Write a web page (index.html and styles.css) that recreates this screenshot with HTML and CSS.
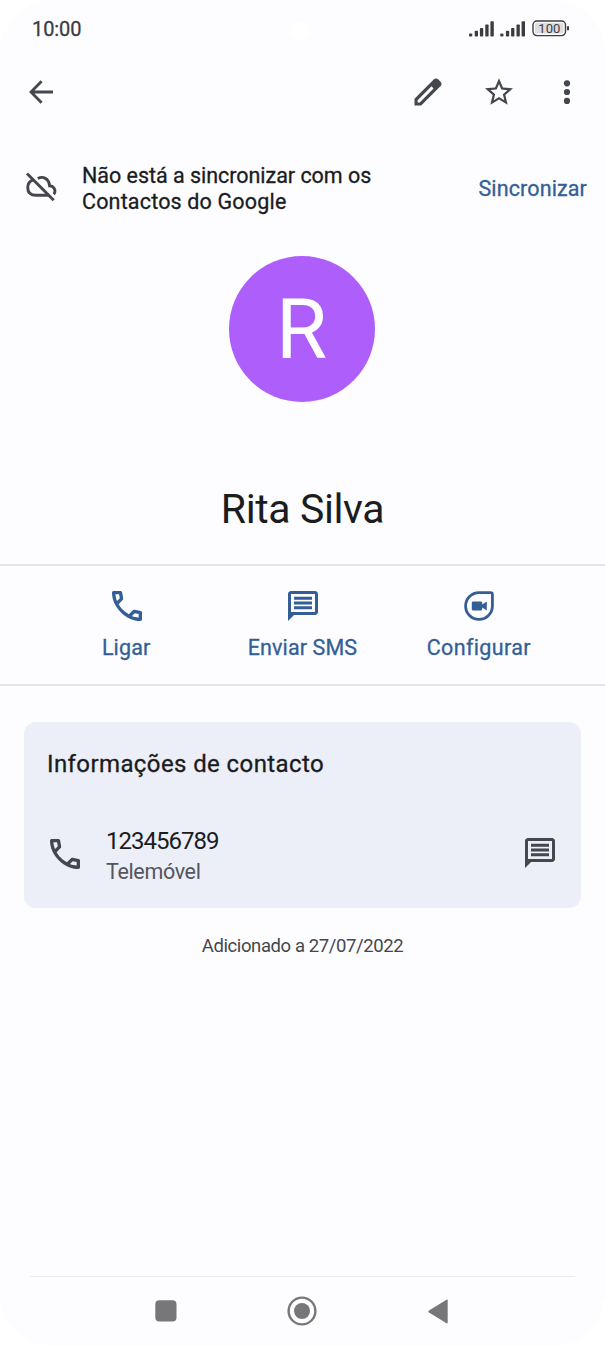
FILE: index.html
```html
<!DOCTYPE html>
<html lang="pt">
<head>
<meta charset="utf-8">
<title>Rita Silva</title>
<link rel="stylesheet" href="styles.css">
</head>
<body>
<svg class="defs" aria-hidden="true">
  <symbol id="phone" viewBox="3 3 18 18"><path d="M19.95 21C17.87 21 15.81 20.55 13.78 19.64C11.74 18.73 9.89 17.44 8.23 15.78C6.56 14.11 5.27 12.26 4.36 10.23C3.45 8.19 3 6.13 3 4.05C3 3.75 3.1 3.5 3.3 3.3C3.5 3.1 3.75 3 4.05 3H8.1C8.33 3 8.54 3.08 8.73 3.24C8.91 3.4 9.02 3.58 9.05 3.8L9.7 7.3C9.73 7.57 9.73 7.79 9.68 7.98C9.63 8.16 9.53 8.32 9.4 8.45L6.98 10.9C7.31 11.52 7.71 12.11 8.16 12.69C8.62 13.26 9.13 13.82 9.68 14.35C10.19 14.87 10.73 15.35 11.3 15.79C11.87 16.23 12.47 16.63 13.1 17L15.45 14.65C15.6 14.5 15.8 14.39 16.04 14.31C16.28 14.24 16.52 14.22 16.75 14.25L20.2 14.95C20.43 15.02 20.63 15.14 20.78 15.31C20.93 15.49 21 15.68 21 15.9V19.95C21 20.25 20.9 20.5 20.7 20.7C20.5 20.9 20.25 21 19.95 21ZM6.03 9L7.68 7.35L7.25 5H5.03C5.11 5.68 5.22 6.36 5.38 7.03C5.53 7.69 5.74 8.35 6.03 9ZM14.98 17.95C15.63 18.23 16.29 18.46 16.96 18.63C17.64 18.79 18.32 18.9 19 18.95V16.75L16.65 16.28L14.98 17.95Z"/></symbol>
  <symbol id="message" viewBox="2 2 20 20"><path fill-rule="evenodd" d="M2 22V4C2 2.9 2.9 2 4 2H20C21.1 2 22 2.9 22 4V16C22 17.1 21.1 18 20 18H6ZM4 4V16H20V4ZM6 5.8H18V7.8H6ZM6 9H18V11H6ZM6 12.1H18V14.1H6Z"/></symbol>
</svg>
<main class="screen">
  <header class="status">
    <time>10:00</time>
    <svg class="signals" viewBox="0 0 102 20">
      <g id="bars"><rect x="1" y="14.5" width="3.3" height="3" rx="1"/><rect x="6.7" y="11.8" width="3.3" height="5.7" rx=".8"/><rect x="11.9" y="9" width="3.3" height="8.5" rx=".8"/><rect x="17.3" y="5.5" width="3.3" height="12" rx=".8"/><rect x="22.4" y="2.2" width="3.4" height="15.3" rx=".8"/></g>
      <use href="#bars" x="31.2"/>
      <rect class="battery" x="65" y="2" width="32.5" height="14.6" rx="4"/>
      <rect class="charge" x="67" y="4" width="28.5" height="10.6" rx="2"/>
      <rect x="99" y="7" width="2" height="4.5" rx="1"/>
      <text x="81.4" y="14.3" text-anchor="middle">100</text>
    </svg>
    <i class="camera"></i>
  </header>
  <nav class="toolbar">
    <svg class="back" viewBox="0 0 24 24"><path d="M12.6 1.2 2 12l10.6 10.8M2 12h22"/></svg>
    <svg class="edit" viewBox="0 0 28 28"><path fill-rule="evenodd" d="M.5 27.5V20.8L19.7 1.5Q22 -.6 24.3 1.5L26.4 3.6Q28.6 6 26.4 8.3L7.2 27.5ZM3.6 24.4H5.7L19.6 10.4 17.5 8.3 3.6 22.2Z"/></svg>
    <svg class="star" viewBox="2 2 20 19"><path d="m22 9.24-7.19-.62L12 2 9.19 8.63 2 9.24l5.46 4.73L5.82 21 12 17.27 18.18 21l-1.63-7.03zM12 15.4l-3.76 2.27 1-4.28-3.32-2.88 4.38-.38L12 6.1l1.71 4.04 4.38.38-3.32 2.88 1 4.28z"/></svg>
    <svg class="more" viewBox="0 0 8 26"><circle cx="4" cy="4.3" r="3.1"/><circle cx="4" cy="13" r="3.1"/><circle cx="4" cy="21.9" r="3.1"/></svg>
  </nav>
  <section class="sync">
    <svg class="cloud" viewBox="0 0 32 32"><path d="M2 2.5 28.7 29.2"/><path d="M8 8.8C4.7 10 2.7 12.6 2.7 16.5 2.7 21.5 5.8 24.3 11 24.3H24.3M12.8 7.5C17.9 4.7 24 7.5 24.6 14.8 28.8 15 30.5 18.5 29.8 21.2 29.6 22 29.2 22.7 28.7 23.3"/></svg>
    <p><span class="line1">Não está a sincronizar com os</span><br><span class="line2">Contactos do Google</span></p>
    <a>Sincronizar</a>
  </section>
  <section class="profile">
    <div class="avatar">R</div>
    <h1>Rita Silva</h1>
  </section>
  <section class="actions">
    <a><svg><use href="#phone"/></svg><span class="call">Ligar</span></a>
    <a><svg><use href="#message"/></svg><span class="sms">Enviar SMS</span></a>
    <a><svg viewBox="0 0 30 30"><path class="ring" d="M15 1.6H26.6Q28.4 1.6 28.4 3.4V15A13.4 13.4 0 1 1 15 1.6Z"/><path d="M9.2 10.4H16.8Q18.2 10.4 18.2 11.8V13.5L22.8 10.5V19.5L18.2 16.5V18.2Q18.2 19.6 16.8 19.6H9.2Q7.8 19.6 7.8 18.2V11.8Q7.8 10.4 9.2 10.4Z"/></svg><span class="video">Configurar</span></a>
  </section>
  <section class="card">
    <h2>Informações de contacto</h2>
    <div class="number">
      <svg><use href="#phone"/></svg>
      <div><p class="value">123456789</p><p class="kind">Telemóvel</p></div>
      <svg><use href="#message"/></svg>
    </div>
  </section>
  <p class="added">Adicionado a 27/07/2022</p>
  <footer>
    <svg class="recent" viewBox="0 0 22 22"><rect x=".3" y=".3" width="21.2" height="21.2" rx="4"/></svg>
    <svg class="home" viewBox="0 0 30 30"><circle class="outline" cx="15" cy="15" r="13.4"/><circle cx="15" cy="15" r="8"/></svg>
    <svg class="return" viewBox="0 0 20 25"><path d="M18.5.7Q19.7 0 19.7 1.5V23.5Q19.7 25 18.5 24.3L1 13.5Q-.3 12.5 1 11.5Z"/></svg>
  </footer>
</main>
</body>
</html>
```
FILE: styles.css
```css
* { box-sizing: border-box; }
body, p, h1, h2 { margin: 0; font-weight: 400; }
body { background: #fff; font-family: Roboto, "Open Sans", sans-serif; color: #1a1c1e; }
svg { display: block; flex: none; fill: currentColor; }
.defs { position: absolute; width: 0; height: 0; }
.screen { width: 605px; height: 1346px; background: #fdfcff; border-radius: 52px; display: flex; flex-direction: column; overflow: hidden; }
.status { position: relative; height: 58px; padding: 0 35px 0 32px; display: flex; align-items: center; justify-content: space-between; color: #3b3c3f; }
.status time { font-size: 20px; letter-spacing: -.1px; -webkit-text-stroke: .3px; }
.signals { width: 102px; height: 20px; }
.signals text { font-size: 13px; letter-spacing: .1px; }
.battery { fill: none; stroke: currentColor; stroke-width: 1.4; }
.charge { fill: #dddde0; }
.camera { position: absolute; left: 291px; top: 22px; width: 18px; height: 18px; border-radius: 50%; background: #fff; }
.toolbar { height: 68px; padding: 0 34px 0 29px; display: flex; align-items: center; color: #44474e; }
.back { width: 24px; height: 24px; fill: none; stroke: currentColor; stroke-width: 2.8; margin-right: auto; }
.edit { width: 28px; height: 28px; margin-right: 43px; }
.star { width: 28px; height: 27px; margin: 0 50px 2px 0; }
.more { width: 8px; height: 26px; }
.sync { height: 124px; padding: 0 18px 0 25px; display: flex; align-items: center; }
.cloud { width: 32px; height: 32px; fill: none; stroke: #44474e; stroke-width: 2.9; margin: 0 25px 2px 0; }
.sync p { padding-top: 2px; font-size: 21.5px; line-height: 26px; flex: 1; white-space: nowrap; -webkit-text-stroke: .3px; }
.line1 { letter-spacing: -.03px; }
.line2 { letter-spacing: .17px; }
.sync a, .actions { color: #335f96; font-size: 21.5px; letter-spacing: .12px; -webkit-text-stroke: .3px; }
.profile { height: 314px; padding-top: 6px; display: flex; flex-direction: column; align-items: center; }
.avatar { width: 146px; height: 146px; margin-right: 2px; border-radius: 50%; background: #ae5ffb; color: #fff; font-size: 83px; line-height: 147px; text-align: center; }
h1 { font-size: 41px; line-height: 50px; margin-top: 82px; letter-spacing: -.4px; }
.actions { height: 122px; padding: 26px 38px 0; border: solid #e5e4ec; border-width: 2px 0; display: grid; grid-template-columns: repeat(3, 1fr); }
.actions a { display: flex; flex-direction: column; align-items: center; gap: 14px; }
.actions svg { width: 30px; height: 30px; margin: -1px 0 0 1px; }
.actions span { line-height: 26px; white-space: nowrap; }
.video { letter-spacing: .35px; }
.ring { fill: none; stroke: currentColor; stroke-width: 2.8; }
.card { margin: 36px 24px 0; height: 186px; border-radius: 12px; background: #eceef8; padding: 26px 26px 0 23px; }
h2 { font-size: 24px; line-height: 32px; letter-spacing: .4px; -webkit-text-stroke: .3px; }
.number { margin-top: 45px; display: flex; align-items: center; color: #44474e; }
.number svg { width: 30px; height: 30px; margin-bottom: 6px; }
.number > svg:first-child { margin: 0 0 5px 3px; }
.number div { flex: 1; margin-left: 26px; }
.value { font-size: 24px; line-height: 32px; letter-spacing: -1px; color: #1a1c1e; }
.kind { font-size: 21.5px; line-height: 30px; letter-spacing: -.35px; color: #54565d; }
.added { margin-top: 25px; text-align: center; font-size: 18.5px; line-height: 26px; letter-spacing: -.4px; color: #44474e; }
footer { margin: auto 30px 0; height: 70px; border-top: 1px solid #ececef; color: #777779; display: flex; align-items: center; padding: 0 0 1px 125px; }
.recent { width: 22px; height: 22px; }
.home { width: 30px; height: 30px; margin-left: 110px; }
.return { width: 20px; height: 25px; margin-left: 111px; }
.outline { fill: none; stroke: currentColor; stroke-width: 2.4; }
```
